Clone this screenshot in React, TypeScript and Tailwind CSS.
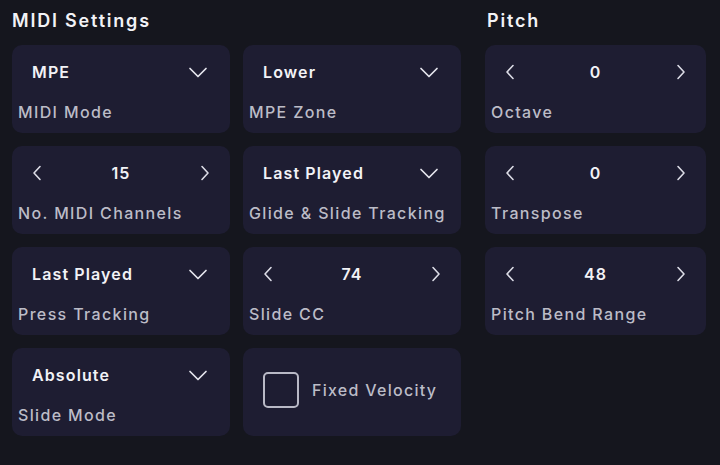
import { useState } from 'react'

type Setting =
  | { kind: 'select'; value: string; label: string }
  | { kind: 'stepper'; value: number; label: string }
  | { kind: 'check'; label: string }

const midi: Setting[] = [
  { kind: 'select', value: 'MPE', label: 'MIDI Mode' },
  { kind: 'select', value: 'Lower', label: 'MPE Zone' },
  { kind: 'stepper', value: 15, label: 'No. MIDI Channels' },
  { kind: 'select', value: 'Last Played', label: 'Glide & Slide Tracking' },
  { kind: 'select', value: 'Last Played', label: 'Press Tracking' },
  { kind: 'stepper', value: 74, label: 'Slide CC' },
  { kind: 'select', value: 'Absolute', label: 'Slide Mode' },
  { kind: 'check', label: 'Fixed Velocity' },
]

const pitch: Setting[] = [
  { kind: 'stepper', value: 0, label: 'Octave' },
  { kind: 'stepper', value: 0, label: 'Transpose' },
  { kind: 'stepper', value: 48, label: 'Pitch Bend Range' },
]

function ChevronDown() {
  return (
    <svg width="20" height="11" viewBox="0 0 20 11" fill="none">
      <path d="M2 1.5l8 8 8-8" stroke="#e6e6ee" strokeWidth="1.7" strokeLinecap="round" strokeLinejoin="round" />
    </svg>
  )
}

function Chevron({ dir }: { dir: 'left' | 'right' }) {
  return (
    <svg width="10" height="16" viewBox="0 0 10 16" fill="none">
      <path
        d={dir === 'left' ? 'M8 1.5L2 8l6 6.5' : 'M2 1.5L8 8l-6 6.5'}
        stroke="#dcdce6"
        strokeWidth="1.6"
        strokeLinecap="round"
        strokeLinejoin="round"
      />
    </svg>
  )
}

function SettingCard({ s }: { s: Setting }) {
  const [on, setOn] = useState(false)

  if (s.kind === 'check') {
    return (
      <button
        onClick={() => setOn(!on)}
        className="h-[88px] rounded-[10px] bg-[#1e1d32] flex items-center gap-[13px] pl-[20px] pb-[4px] text-left"
      >
        <span className="w-[36px] h-[36px] rounded-[5px] border-2 border-[#b9b9c6]" />
        <span className="text-[16px] font-medium tracking-[0.08em] text-[#bcbcc7]">{s.label}</span>
      </button>
    )
  }

  return (
    <div className="h-[88px] rounded-[10px] bg-[#1e1d32] flex flex-col pt-[15px] px-[6px]">
      {s.kind === 'select' ? (
        <div className="h-[24px] flex items-center justify-between pl-[14px] pr-[16px]">
          <span className="text-[16px] font-semibold tracking-[0.07em] text-[#f2f2f6]">{s.value}</span>
          <ChevronDown />
        </div>
      ) : (
        <div className="h-[24px] flex items-center justify-between pl-[14px] pr-[14px]">
          <Chevron dir="left" />
          <span className="text-[16px] font-semibold tracking-[0.07em] text-[#f2f2f6]">{s.value}</span>
          <Chevron dir="right" />
        </div>
      )}
      <div className="mt-[16px] text-[16px] font-medium tracking-[0.085em] text-[#bcbcc7] whitespace-nowrap">
        {s.label}
      </div>
    </div>
  )
}

export default function App() {
  return (
    <div className="w-[720px] h-[465px] bg-[#15161e] font-['Inter',sans-serif] pl-[12px] pt-[7px] flex gap-[23px]">
      <section className="w-[450px]">
        <h2 className="text-[18px] font-semibold tracking-[0.1em] text-[#f2f2f6] h-[26px] flex items-center">
          MIDI Settings
        </h2>
        <div className="mt-[12px] grid grid-cols-[218px_218px] gap-x-[13px] gap-y-[13px]">
          {midi.map((s, i) => (
            <SettingCard key={i} s={s} />
          ))}
        </div>
      </section>
      <section className="w-[221px]">
        <h2 className="text-[18px] font-semibold tracking-[0.1em] text-[#f2f2f6] h-[26px] flex items-center pl-[2px]">
          Pitch
        </h2>
        <div className="mt-[12px] flex flex-col gap-[13px]">
          {pitch.map((s, i) => (
            <SettingCard key={i} s={s} />
          ))}
        </div>
      </section>
    </div>
  )
}
